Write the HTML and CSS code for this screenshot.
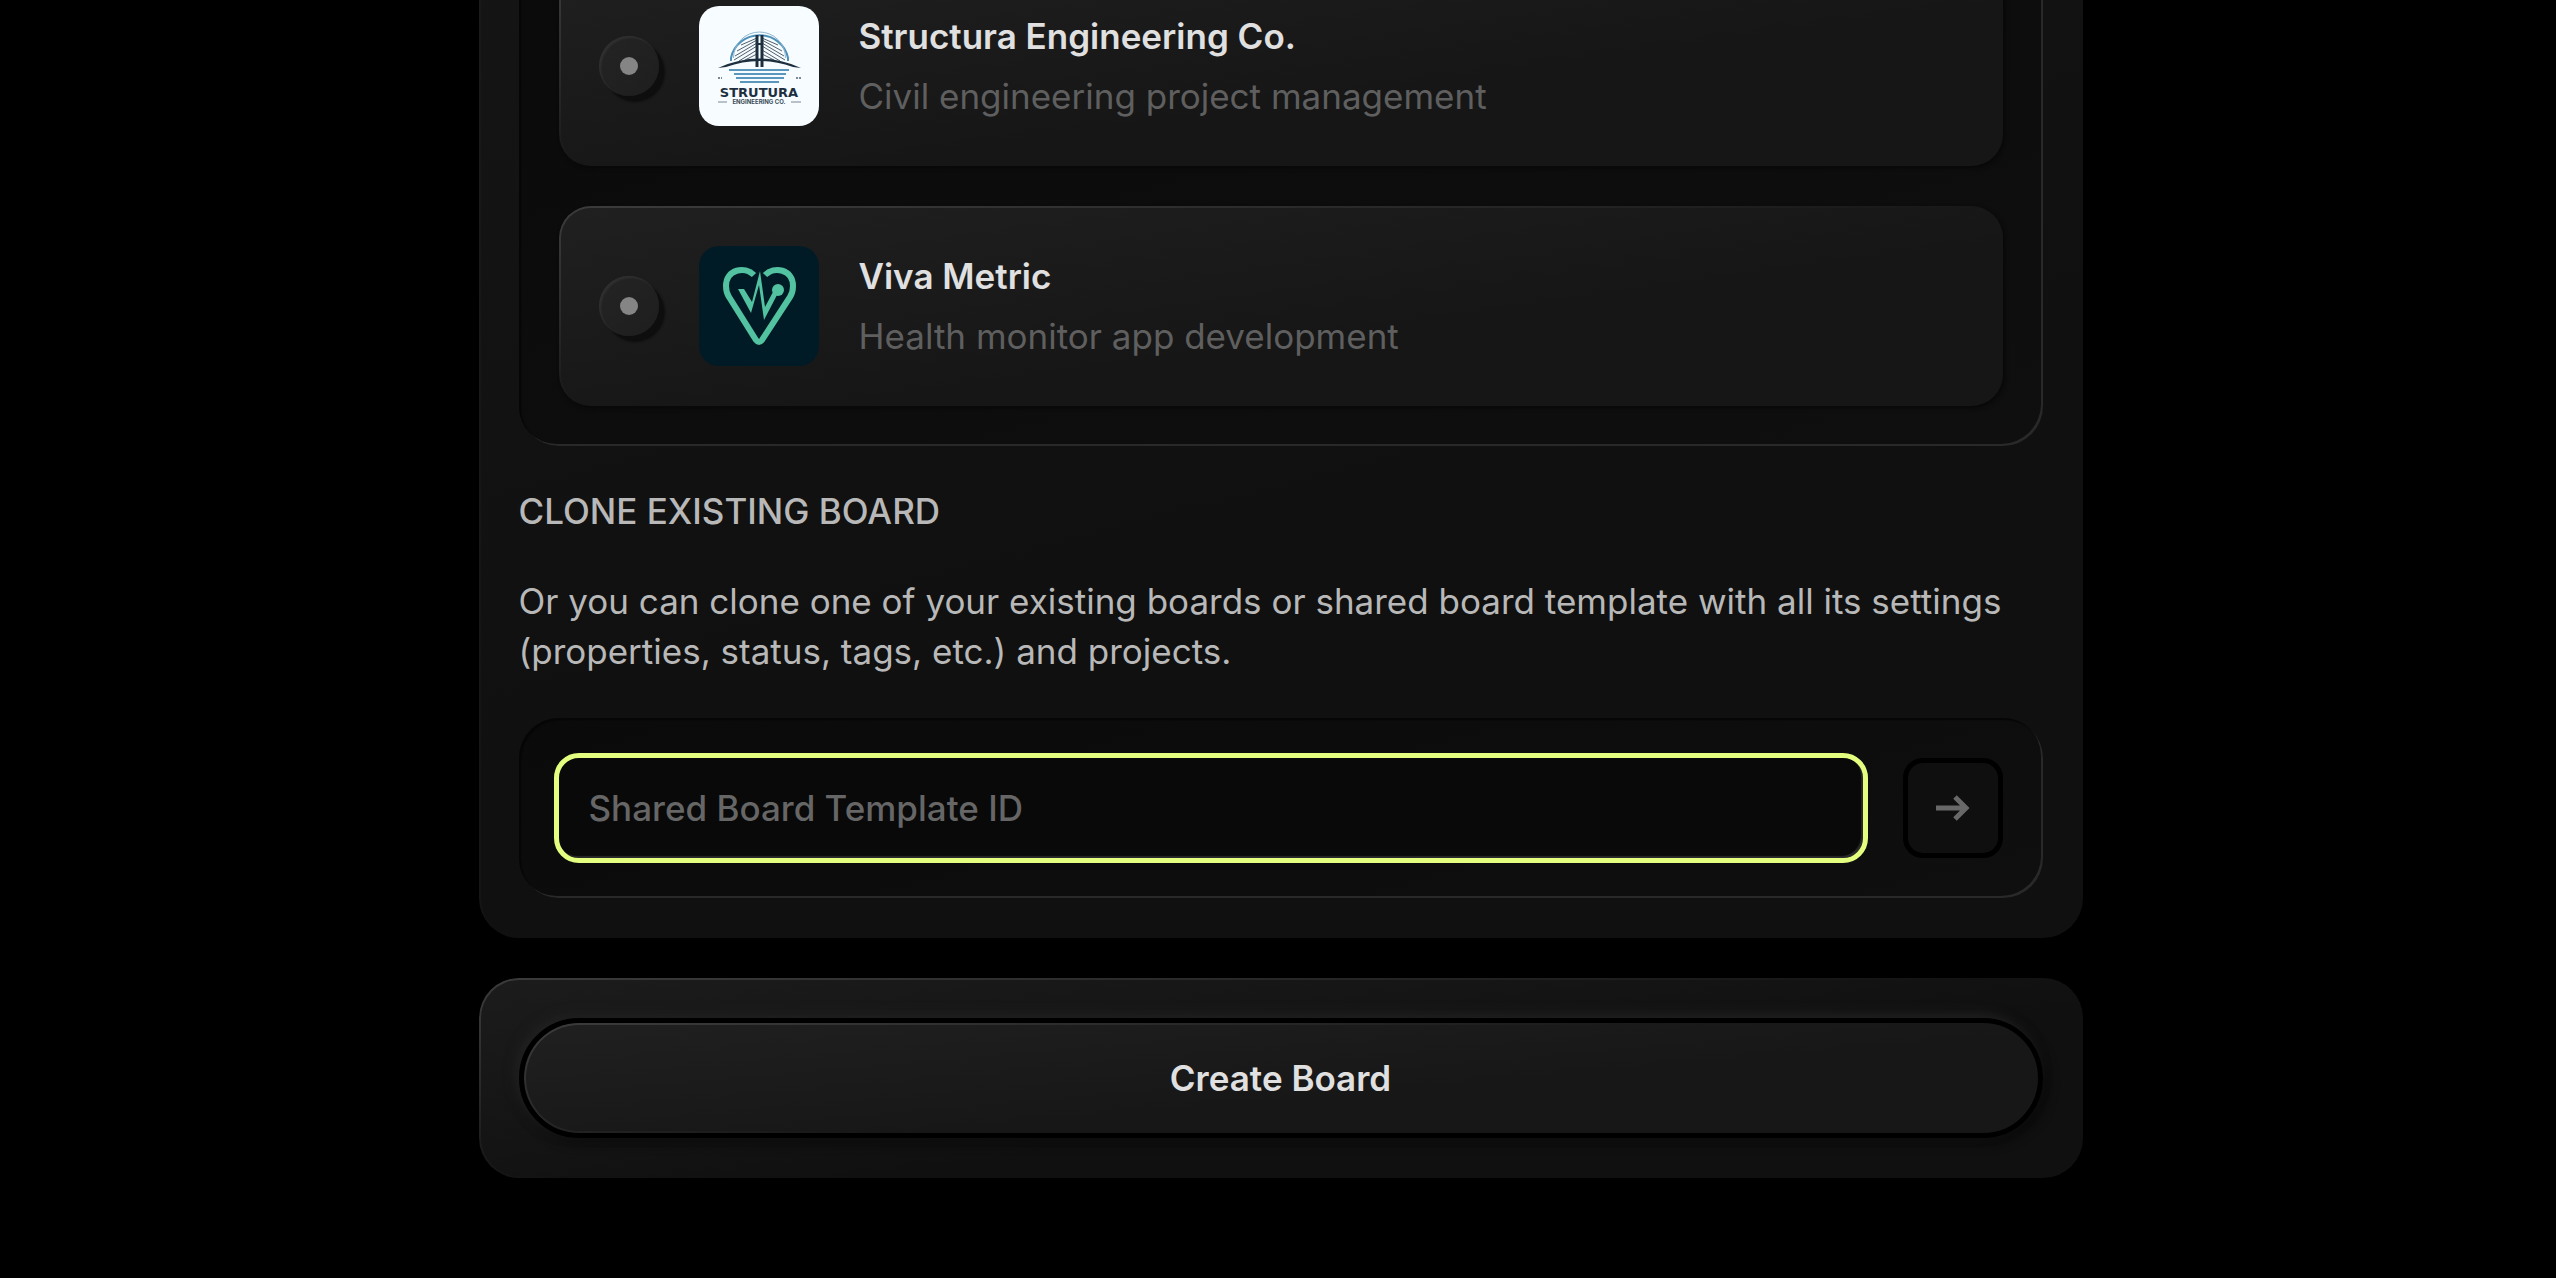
FILE: index.html
```html
<!DOCTYPE html>
<html lang="en">
<head>
<meta charset="utf-8">
<title>Create Board</title>
<link rel="stylesheet" href="styles.css">
</head>
<body>
<form class="page">
  <section class="panel">
    <div class="well list">
      <label class="card">
        <input class="radio" type="radio" name="template">
        <svg class="logo" viewBox="0 0 120 120" aria-hidden="true">
          <rect width="120" height="120" fill="#f6fcff"/>
          <path d="M32 55V52a29 28 0 0 1 57 0v3" fill="none" stroke="#4f90b8" stroke-width="2"/>
          <path d="M34.500 52a26 26 0 0 1 52 0" fill="none" stroke="#8fb6cf" stroke-width="1"/>
          <path d="M58 34L38 45M58 37L36 50M58 40L35 54M58 44L40 55M58 48L46 54M58 32L42 39M63 34L83 45M63 37L85 50M63 40L86 54M63 44L81 55M63 48L75 54M63 32L79 39" stroke="#50606c" stroke-width="1"/>
          <path d="M58 29V61M63 29V61" stroke="#1d2f3e" stroke-width="3"/>
          <path d="M58 38h5M58 54h5" stroke="#1d2f3e" stroke-width="2"/>
          <path d="M19 62Q60 43 102 62L94 61Q60 49 27 61Z" fill="#1d2f3e"/>
          <path d="M30 64H90M35 68H87M37 72H85M41 76H80" stroke="#5b97bd" stroke-width="2"/>
          <path d="M19 72h4M97 72h5" stroke="#7b8791" stroke-width="2" stroke-dasharray="2 1"/>
          <text class="mark-name" x="60" y="91" text-anchor="middle">STRUTURA</text>
          <text class="mark-tag" x="60" y="98" text-anchor="middle">ENGINEERING CO.</text>
          <path d="M19 96h9M92 96h10" stroke="#7b8791"/>
        </svg>
        <span class="copy">
          <span class="name">Structura Engineering Co.</span>
          <span class="about">Civil engineering project management</span>
        </span>
      </label>
      <label class="card">
        <input class="radio" type="radio" name="template">
        <svg class="logo" viewBox="0 0 120 120" aria-hidden="true">
          <rect width="120" height="120" fill="#011b26"/>
          <path d="M55 29C46 20 27 23 27 40C27 45 28 48 30 51L57 94Q60 98 63 94L91 51C93 48 94 45 94 40C94 23 75 20 66 29" fill="none" stroke="#52c2a0" stroke-width="6"/>
          <path d="M39 43h6l8 13L61 25l5 36 8-15 4 3L65 74 60 39 52 67Z" fill="#52c2a0"/>
          <circle cx="79" cy="44" r="6" fill="#52c2a0"/>
        </svg>
        <span class="copy">
          <span class="name">Viva Metric</span>
          <span class="about">Health monitor app development</span>
        </span>
      </label>
    </div>
    <h2 class="heading">CLONE EXISTING BOARD</h2>
    <p class="text">Or you can clone one of your existing boards or shared board template with all its settings (properties, status, tags, etc.) and projects.</p>
    <div class="well clone">
      <input class="field" type="text" placeholder="Shared Board Template ID" aria-label="Shared Board Template ID">
      <button class="go" type="button" aria-label="Clone board">
        <svg class="arrow" viewBox="0 0 34 28" aria-hidden="true"><path d="M0 14H31M19 3L30 14L19 25" fill="none" stroke="#686868" stroke-width="5"/></svg>
      </button>
    </div>
  </section>
  <section class="panel footer">
    <button class="create" type="submit">Create Board</button>
  </section>
</form>
</body>
</html>
```
FILE: styles.css
```css
* { box-sizing: border-box; }
html { background: #000; overflow: hidden; }
body {
  margin: 0;
  padding-left: 5px;
  color: #b8b8b8;
  font-family: Inter, "Liberation Sans", sans-serif;
  font-size: 35px;
  line-height: 50px;
}
.page {
  display: flex;
  flex-direction: column;
  gap: 40px;
  max-width: 1604px;
  /* the form is scrolled past its first rows */
  margin: -114px auto 0;
}
.panel {
  padding: 40px;
  border-radius: 40px;
  background: linear-gradient(165deg, #151515, #101010 60%);
  box-shadow: inset 2px 2px 2px rgba(255, 255, 255, 0.03);
}
.well {
  padding: 40px;
  border-radius: 40px;
  background: linear-gradient(165deg, #0a0a0a, #0f0f0f);
  box-shadow: inset 2px 2px 1px #060606, inset -2px -2px 0 #292929;
}
.list { display: flex; flex-direction: column; gap: 40px; }
.card {
  display: flex;
  align-items: center;
  gap: 40px;
  padding: 40px;
  border-radius: 32px;
  background: linear-gradient(172deg, #202020, #161616 60%);
  box-shadow: 2px 2px 4px #080808;
  position: relative;
}
/* edge highlight that fades away from the top left corner */
.card::before, .footer::before, .create::before {
  content: "";
  position: absolute;
  inset: 0;
  border-radius: inherit;
  padding: 2px;
  background: linear-gradient(172deg, #3c3c3c, transparent 50%);
  mask: linear-gradient(#000 0 0) content-box exclude, linear-gradient(#000 0 0);
  pointer-events: none;
}
.radio {
  appearance: none;
  display: grid;
  place-items: center;
  flex: none;
  width: 60px;
  height: 60px;
  margin: 0;
  border-radius: 50%;
  background: linear-gradient(135deg, #242424, #1e1e1e);
  box-shadow: 6px 6px 2px #0e0e0e, inset 2px 2px 2px #303030;
}
.radio::before {
  content: "";
  width: 18px;
  height: 18px;
  border-radius: 50%;
  background: #858585;
}
.logo { flex: none; width: 120px; height: 120px; border-radius: 20px; }
.mark-name { font: 700 13px "DejaVu Sans", sans-serif; fill: #1d2f3e; }
.mark-tag { font: 700 6px Inter, sans-serif; fill: #3c4c59; }
.copy { display: flex; flex-direction: column; gap: 10px; }
.name { color: #e0e0e0; font-weight: 600; }
.about { color: #5f5f5f; }
.heading {
  margin: 40px 0;
  color: #b8b8b8;
  font-size: 35px;
  font-weight: 500;
  line-height: 50px;
}
.text { margin: 0 0 42px; }
.clone { display: flex; gap: 40px; }
.field {
  flex: 1;
  min-width: 0;
  height: 100px;
  padding: 0 30px;
  border: 0;
  border-radius: 20px;
  outline: 5px solid #e4ff80;
  background: #090909;
  box-shadow: inset -2px -2px 1px #2a2a2a;
  color: #e0e0e0;
  font: 500 35px Inter, "Liberation Sans", sans-serif;
}
.field::placeholder { color: #666; opacity: 1; }
.go {
  display: grid;
  place-items: center;
  width: 100px;
  height: 100px;
  padding: 0;
  border: 5px solid #000;
  border-radius: 20px;
  background: #0f0f0f;
}
.arrow { width: 34px; height: 28px; }
.footer { position: relative; background: linear-gradient(172deg, #1c1c1c, #101010 60%); box-shadow: none; }
.create {
  position: relative;
  display: block;
  width: 100%;
  height: 120px;
  border: 5px solid #000;
  border-radius: 60px;
  background: linear-gradient(175deg, #202020, #171717 60%);
  box-shadow: -4px -4px 12px #222, 4px 4px 12px #080808;
  color: #e0e0e0;
  font: 600 35px Inter, "Liberation Sans", sans-serif;
}
```
